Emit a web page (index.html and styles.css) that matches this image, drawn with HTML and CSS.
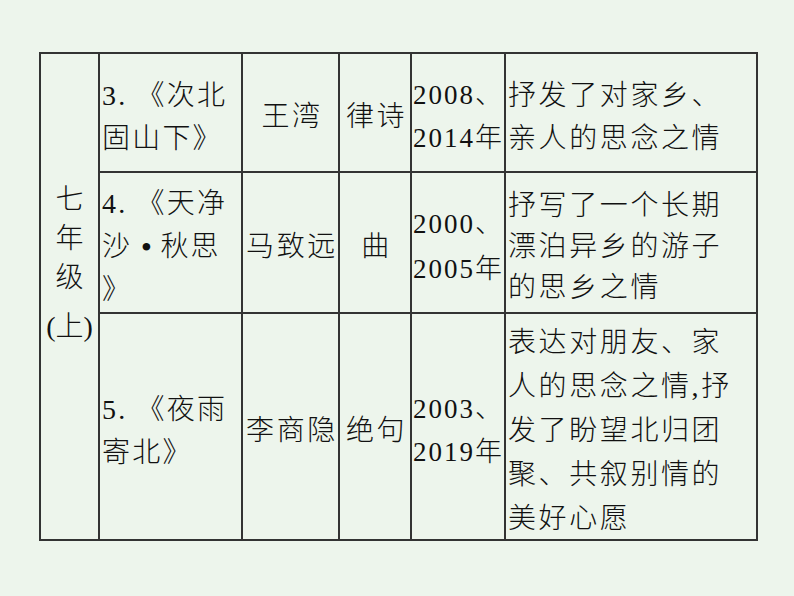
FILE: index.html
```html
<!DOCTYPE html>
<html lang="zh-CN">
<head>
<meta charset="utf-8">
<title>七年级（上）古诗词</title>
<link rel="stylesheet" href="styles.css">
</head>
<body>
<div class="sheet">
  <div class="cell grade">
    <div class="grade-chars">七<br>年<br>级</div>
    <div class="grade-term">(上)</div>
  </div>

  <div class="cell title"><div>3. 《次北<br>固山下》</div></div>
  <div class="cell mid"><div>王湾</div></div>
  <div class="cell mid"><div>律诗</div></div>
  <div class="cell year"><div>2008、<br>2014年</div></div>
  <div class="cell desc"><div>抒发了对家乡、<br>亲人的思念之情</div></div>

  <div class="cell title"><div>4. 《天净<br>沙 <span class="dot">•</span> 秋思<br>》</div></div>
  <div class="cell mid"><div>马致远</div></div>
  <div class="cell mid"><div>曲</div></div>
  <div class="cell year year-wide"><div>2000、<br>2005年</div></div>
  <div class="cell desc desc-tight"><div>抒写了一个长期<br>漂泊异乡的游子<br>的思乡之情</div></div>

  <div class="cell title"><div>5. 《夜雨<br>寄北》</div></div>
  <div class="cell mid"><div>李商隐</div></div>
  <div class="cell mid"><div>绝句</div></div>
  <div class="cell year"><div>2003、<br>2019年</div></div>
  <div class="cell desc desc-loose"><div>表达对朋友、家<br>人的思念之情,抒<br>发了盼望北归团<br>聚、共叙别情的<br>美好心愿</div></div>
</div>
</body>
</html>
```

FILE: styles.css
```css
html, body {
  margin: 0;
  padding: 0;
}

body {
  width: 794px;
  height: 596px;
  overflow: hidden;
  background: #edf5ec;
  font-family: "Liberation Serif", "Noto Sans CJK SC", serif;
  color: #111;
}

.sheet {
  display: grid;
  grid-template-columns: 57px 141px 95px 70px 92px 250px;
  grid-template-rows: 117px 139px 225px;
  gap: 2px;
  padding: 2px;
  width: max-content;
  margin: 52px 0 0 39px;
  background: #333;
}

.cell {
  background: #edf5ec;
  display: flex;
  flex-direction: column;
  justify-content: center;
  box-sizing: border-box;
  padding-top: 8px;
  font-size: 28px;
  font-weight: 300;
  line-height: 43px;
  letter-spacing: 2.6px;
  white-space: nowrap;
}

.grade {
  grid-row: 1 / 4;
  justify-content: flex-start;
  align-items: center;
  text-align: center;
  padding-top: 126px;
  letter-spacing: 0;
}

.grade-chars {
  line-height: 39px;
}

.grade-term {
  margin-top: 10px;
  line-height: 39px;
}

.title {
  padding-left: 2px;
  letter-spacing: 2.2px;
}

.dot {
  letter-spacing: 0;
  font-weight: 700;
}

.mid {
  align-items: center;
  text-align: center;
  padding-left: 3px;
}

.year {
  padding-left: 1px;
  font-size: 27px;
  letter-spacing: 2px;
}

.year-wide {
  line-height: 45px;
}

.desc {
  padding-left: 2px;
}

.desc-tight {
  line-height: 41px;
}

.desc-loose {
  line-height: 44px;
}
```
